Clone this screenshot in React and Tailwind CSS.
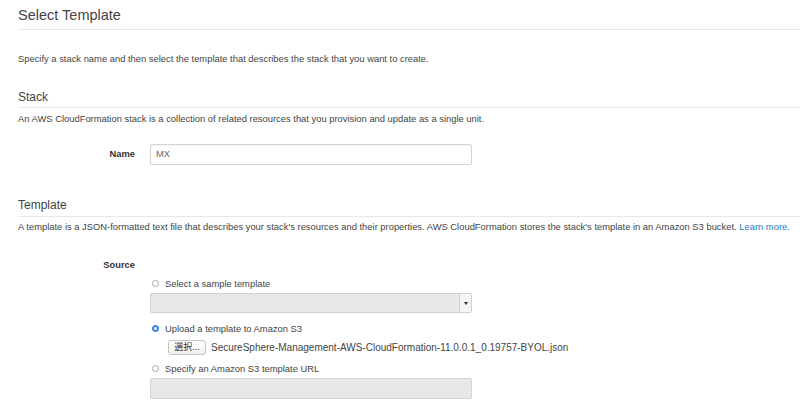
import React from 'react';

// Radio dot drawn by hand so it matches the old Mac look
const Radio = ({ checked }) => (
  <span
    className={
      checked
        ? 'w-[7px] h-[7px] rounded-full bg-[#2f86f0] border border-[#2a78d8] flex items-center justify-center'
        : 'inline-block w-[7px] h-[7px] rounded-full bg-white border border-[#a8a8a8]'
    }
  >
    {checked && <span className="block w-[3px] h-[3px] rounded-full bg-white" />}
  </span>
);

const RadioOption = ({ checked, children }) => (
  <div className="flex items-center h-[11px] pl-[2px]">
    <Radio checked={checked} />
    <span className="ml-[6px] text-[9.4px] leading-[11px] text-[#444]">{children}</span>
  </div>
);

const App = () => {
  return (
    <div className="w-[800px] h-[415px] overflow-hidden bg-white text-[#444] font-['Liberation_Sans',Arial,sans-serif]">
      <div className="pl-[18px]">
        <h1 className="pt-[6px] pb-[5px] text-[14.5px] leading-[18px] font-normal text-[#444] border-b border-[#e8e8e8]">
          Select Template
        </h1>
        <p className="mt-[23px] text-[9.4px] leading-[11px]">
          Specify a stack name and then select the template that describes the stack that you want to create.
        </p>

        {/* Stack */}
        <h2 className="mt-[26px] pb-[2px] text-[12px] leading-[15px] text-[#444] border-b border-[#e8e8e8]">Stack</h2>
        <p className="mt-[5px] text-[9.4px] leading-[11px]">
          An AWS CloudFormation stack is a collection of related resources that you provision and update as a single unit.
        </p>
        <div className="mt-[20px] flex items-center">
          <label className="w-[117px] text-right text-[9.4px] font-bold text-[#333]">Name</label>
          <div className="ml-[15px] w-[322px] h-[21px] border border-[#d4d4d4] rounded-[2px] bg-white flex items-center px-[5px] shadow-[inset_0_1px_1px_rgba(0,0,0,0.05)]">
            <span className="text-[9.4px] text-[#666]">MX</span>
          </div>
        </div>

        {/* Template */}
        <h2 className="mt-[33px] pb-[3px] text-[12px] leading-[15px] text-[#444] border-b border-[#e8e8e8]">Template</h2>
        <p className="mt-[4px] text-[9.4px] leading-[11px] whitespace-nowrap">
          A template is a JSON-formatted text file that describes your stack's resources and their properties. AWS CloudFormation stores the stack's template in an Amazon S3 bucket.{' '}
          <span className="text-[#2a7bc8]">Learn more.</span>
        </p>

        <div className="mt-[27px] flex items-start">
          <div className="w-[117px] text-right text-[9.4px] leading-[11px] font-bold text-[#333]">Source</div>
          <div className="ml-[15px] w-[322px] pt-[19px]">
            <RadioOption>Select a sample template</RadioOption>
            <div className="mt-[4px] h-[20px] border border-[#d0d0d0] rounded-[2px] bg-[#e8e8e8] flex justify-end">
              <div className="w-[12px] border-l border-[#d0d0d0] bg-[#f4f4f4] flex items-center justify-center">
                <svg width="4" height="3" viewBox="0 0 4 3">
                  <path d="M0 0 L4 0 L2 3 Z" fill="#333" />
                </svg>
              </div>
            </div>

            <div className="mt-[10px]">
              <RadioOption checked>Upload a template to Amazon S3</RadioOption>
            </div>
            <div className="mt-[6px] pl-[18px] flex items-center">
              <div className="shrink-0 h-[15px] w-[38px] border border-[#c4c4c4] rounded-[3px] bg-gradient-to-b from-white to-[#f0f0f0] flex items-center justify-center whitespace-nowrap text-[9px] text-[#333] font-['Liberation_Sans','Noto_Sans_CJK_JP',sans-serif]">
                選択...
              </div>
              <span className="ml-[5px] text-[10px] text-[#444] whitespace-nowrap">
                SecureSphere-Management-AWS-CloudFormation-11.0.0.1_0.19757-BYOL.json
              </span>
            </div>

            <div className="mt-[8px]">
              <RadioOption>Specify an Amazon S3 template URL</RadioOption>
            </div>
            <div className="mt-[4px] h-[21px] border border-[#d4d4d4] rounded-[2px] bg-[#e8e8e8]" />
          </div>
        </div>
      </div>
    </div>
  );
};

export default App;
